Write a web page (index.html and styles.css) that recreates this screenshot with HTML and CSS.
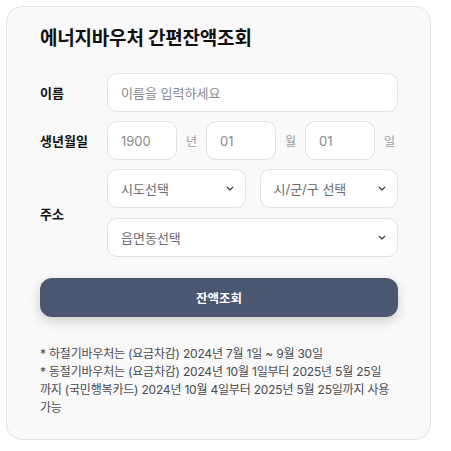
FILE: index.html
```html
<!DOCTYPE html>
<html lang="ko">
<head>
<meta charset="utf-8">
<title>에너지바우처 간편잔액조회</title>
<link rel="stylesheet" href="styles.css">
</head>
<body>
<div class="card">
  <h1 class="title">에너지바우처 간편잔액조회</h1>
  <div class="row">
    <div class="label">이름</div>
    <div class="field"><input class="input full" type="text" placeholder="이름을 입력하세요"></div>
  </div>
  <div class="row">
    <div class="label">생년월일</div>
    <div class="field birth">
      <input class="input small" type="text" placeholder="1900">
      <span class="unit">년</span>
      <input class="input small" type="text" placeholder="01">
      <span class="unit">월</span>
      <input class="input small" type="text" placeholder="01">
      <span class="unit">일</span>
    </div>
  </div>
  <div class="row">
    <div class="label">주소</div>
    <div class="field addr">
      <div class="addr-top">
        <div class="select"><span>시도선택</span><svg class="chev" width="8" height="5" viewBox="0 0 8 5"><path d="M1 1l3 3 3-3" fill="none" stroke="#333" stroke-width="1.2"/></svg></div>
        <div class="select"><span>시/군/구 선택</span><svg class="chev" width="8" height="5" viewBox="0 0 8 5"><path d="M1 1l3 3 3-3" fill="none" stroke="#333" stroke-width="1.2"/></svg></div>
      </div>
      <div class="select"><span>읍면동선택</span><svg class="chev" width="8" height="5" viewBox="0 0 8 5"><path d="M1 1l3 3 3-3" fill="none" stroke="#333" stroke-width="1.2"/></svg></div>
    </div>
  </div>
  <button class="btn" type="button">잔액조회</button>
  <div class="notes">
    <p>* 하절기바우처는 (요금차감) 2024년 7월 1일 ~ 9월 30일</p>
    <p>* 동절기바우처는 (요금차감) 2024년 10월 1일부터 2025년 5월 25일<br>까지 (국민행복카드) 2024년 10월 4일부터 2025년 5월 25일까지 사용 가능</p>
  </div>
</div>
</body>
</html>
```
FILE: styles.css
```css
* { box-sizing: border-box; }
html, body { margin: 0; padding: 0; background: #fff; }
body {
  font-family: "Inter", "Noto Sans CJK KR", sans-serif;
  color: #111;
}
.card {
  margin: 6px 0 0 6px;
  width: 425px;
  background: #f9f9fa;
  border: 1px solid #e3e3e6;
  border-radius: 16px;
  padding: 19px 32px 22px 33px;
}
.title {
  margin: 0 0 21px;
  font-size: 19px;
  line-height: 26px;
  font-weight: 700;
  letter-spacing: -0.2px;
  color: #111;
}
.row {
  display: flex;
  align-items: center;
  margin-bottom: 9px;
}
.label {
  width: 67px;
  flex: none;
  font-size: 13px;
  font-weight: 700;
  color: #111;
}
.field { flex: 1; min-width: 0; }
.input {
  height: 39px;
  border: 1px solid #e1e1e4;
  border-radius: 10px;
  background: #fff;
  padding: 0 13px;
  font-family: inherit;
  font-size: 13px;
  color: #333;
  outline: none;
}
.input::placeholder { color: #8a8a8f; }
.full { width: 100%; }
.birth { display: flex; align-items: center; }
.small { width: 70px; }
.unit {
  width: 29px;
  text-align: center;
  font-size: 12px;
  color: #9a9a9f;
}
.unit:last-child { width: auto; margin-left: 9px; }
.addr { display: flex; flex-direction: column; gap: 10px; }
.addr-top { display: flex; gap: 14px; }
.addr-top .select { flex: 1; }
.select {
  height: 39px;
  border: 1px solid #e1e1e4;
  border-radius: 10px;
  background: #fff;
  padding: 0 11px 0 13px;
  display: flex;
  align-items: center;
  justify-content: space-between;
  font-size: 13px;
  color: #6b6b70;
}
.chev { flex: none; }
.btn {
  display: block;
  width: 100%;
  height: 39px;
  margin-top: 21px;
  border: none;
  border-radius: 12px;
  background: #4b5670;
  color: #fff;
  font-family: inherit;
  font-size: 12.5px;
  font-weight: 700;
  box-shadow: 0 4px 12px rgba(0,0,0,0.18);
}
.notes {
  margin-top: 28px;
  font-size: 12px;
  line-height: 18px;
  color: #4a4a4f;
  letter-spacing: -0.2px;
}
.notes p { margin: 0; }
```
